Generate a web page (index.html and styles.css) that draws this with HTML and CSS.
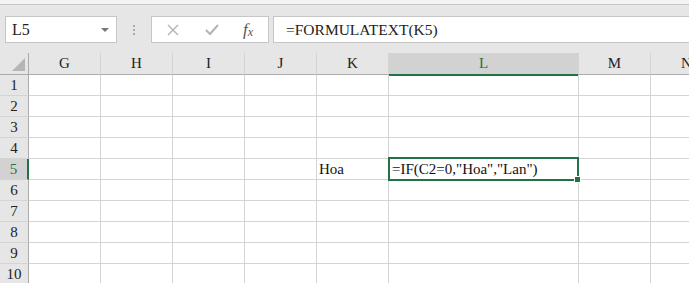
FILE: index.html
```html
<!DOCTYPE html>
<html lang="en">
<head>
    <meta charset="UTF-8">
    <meta name="viewport" content="width=device-width, initial-scale=1.0">
    <title>FORMULATEXT</title>
    <link rel="stylesheet" href="styles.css">
</head>
<body>
    <div class="top-strip"></div>

    <!-- thanh công thức -->
    <div class="formula-bar">
        <div class="name-box">
            <span>L5</span>
            <span class="arrow"></span>
        </div>
        <div class="grip"><i></i><i></i><i></i></div>
        <div class="fx-box">
            <svg width="12" height="12" viewBox="0 0 12 12"><path d="M1 1 L11 11 M11 1 L1 11" stroke="#b3b3b3" stroke-width="1.4" fill="none"/></svg>
            <svg width="14" height="12" viewBox="0 0 14 12"><path d="M1 6 L5 10 L13 1" stroke="#b3b3b3" stroke-width="2" fill="none"/></svg>
            <span class="fx">f<sub>x</sub></span>
        </div>
        <div class="formula-input">=FORMULATEXT(K5)</div>
    </div>

    <!-- bảng tính -->
    <div class="sheet" id="sheet"></div>

    <script>
        const cols = ["G", "H", "I", "J", "K", "L", "M", "N"];
        const sheet = document.getElementById("sheet");
        let html = '<div class="corner"></div>';
        cols.forEach(c => {
            html += `<div class="col-head${c === "L" ? " active" : ""}">${c}</div>`;
        });
        for (let r = 1; r <= 10; r++) {
            html += `<div class="row-head${r === 5 ? " active" : ""}">${r}</div>`;
            cols.forEach(c => {
                let text = "";
                let cls = "cell";
                if (r === 5 && c === "K") text = "Hoa";
                if (r === 5 && c === "L") {
                    text = '=IF(C2=0,"Hoa","Lan")';
                    cls += " selected";
                }
                html += `<div class="${cls}">${text}</div>`;
            });
        }
        sheet.innerHTML = html;
    </script>
</body>
</html>
```
FILE: styles.css
```css
body {
    margin: 0;
    background-color: #fff;
    font-family: "Liberation Serif", "Times New Roman", serif;
    overflow: hidden;
}

.top-strip {
    height: 4px;
    background-color: #f3f3f3;
    border-bottom: 1px solid #c6c6c6;
}

.formula-bar {
    display: flex;
    align-items: flex-start;
    height: 48px;
    padding: 11px 0 0 5px;
    box-sizing: border-box;
    background-color: #e6e6e6;
}

.name-box,
.fx-box,
.formula-input {
    height: 27px;
    box-sizing: border-box;
    border: 1px solid #c6c6c6;
    background-color: #fff;
    font-size: 16px;
    color: #222;
}

.name-box {
    width: 112px;
    display: flex;
    align-items: center;
    justify-content: space-between;
    padding: 0 7px 0 6px;
}

.name-box .arrow {
    width: 0;
    height: 0;
    border-left: 4px solid transparent;
    border-right: 4px solid transparent;
    border-top: 4px solid #777;
}

.grip {
    width: 34px;
    height: 27px;
    display: flex;
    flex-direction: column;
    align-items: center;
    justify-content: center;
    gap: 2px;
}

.grip i {
    width: 2px;
    height: 2px;
    background-color: #aaa;
}

.fx-box {
    width: 118px;
    display: flex;
    align-items: center;
    padding-left: 15px;
}

.fx-box svg:first-child {
    margin-right: 26px;
}

.fx {
    margin-left: 24px;
    font-style: italic;
    font-size: 17px;
    color: #555;
}

.fx sub {
    font-size: 12px;
    vertical-align: -1px;
}

.formula-input {
    flex: 1;
    margin-left: 4px;
    border-right: none;
    padding-left: 12px;
    line-height: 25px;
    font-size: 15.5px;
}

.sheet {
    display: grid;
    grid-template-columns: 29px 72px 72px 72px 72px 72px 190px 72px 72px;
    grid-template-rows: 22px repeat(10, 21px);
    font-size: 15px;
}

.corner,
.col-head,
.row-head,
.cell {
    box-sizing: border-box;
    border-right: 1px solid #d4d4d4;
    border-bottom: 1px solid #d4d4d4;
}

.corner {
    position: relative;
    background-color: #e6e6e6;
    border-right-color: #ababab;
    border-bottom-color: #ababab;
}

.corner::after {
    content: "";
    position: absolute;
    right: 3px;
    bottom: 3px;
    width: 0;
    height: 0;
    border-left: 13px solid transparent;
    border-bottom: 13px solid #b5b5b5;
}

.col-head {
    background-color: #e6e6e6;
    border-bottom-color: #ababab;
    text-align: center;
    line-height: 21px;
    color: #222;
}

.col-head.active {
    background-color: #d2d2d2;
    border-bottom: 2px solid #217346;
    color: #217346;
    margin-bottom: -1px;
}

.row-head {
    background-color: #e6e6e6;
    border-right-color: #ababab;
    text-align: center;
    line-height: 21px;
    color: #222;
}

.row-head.active {
    background-color: #d2d2d2;
    border-right: 2px solid #217346;
    color: #217346;
}

.cell {
    padding-left: 2px;
    line-height: 21px;
    white-space: nowrap;
    color: #111;
}

.cell.selected {
    position: relative;
    padding-left: 3px;
}

.cell.selected::before {
    content: "";
    position: absolute;
    left: -1px;
    top: -2px;
    right: -1px;
    bottom: -2px;
    border: 2px solid #217346;
}

.cell.selected::after {
    content: "";
    position: absolute;
    right: -3px;
    bottom: -4px;
    width: 5px;
    height: 5px;
    background-color: #217346;
    border: 1px solid #fff;
}
```
